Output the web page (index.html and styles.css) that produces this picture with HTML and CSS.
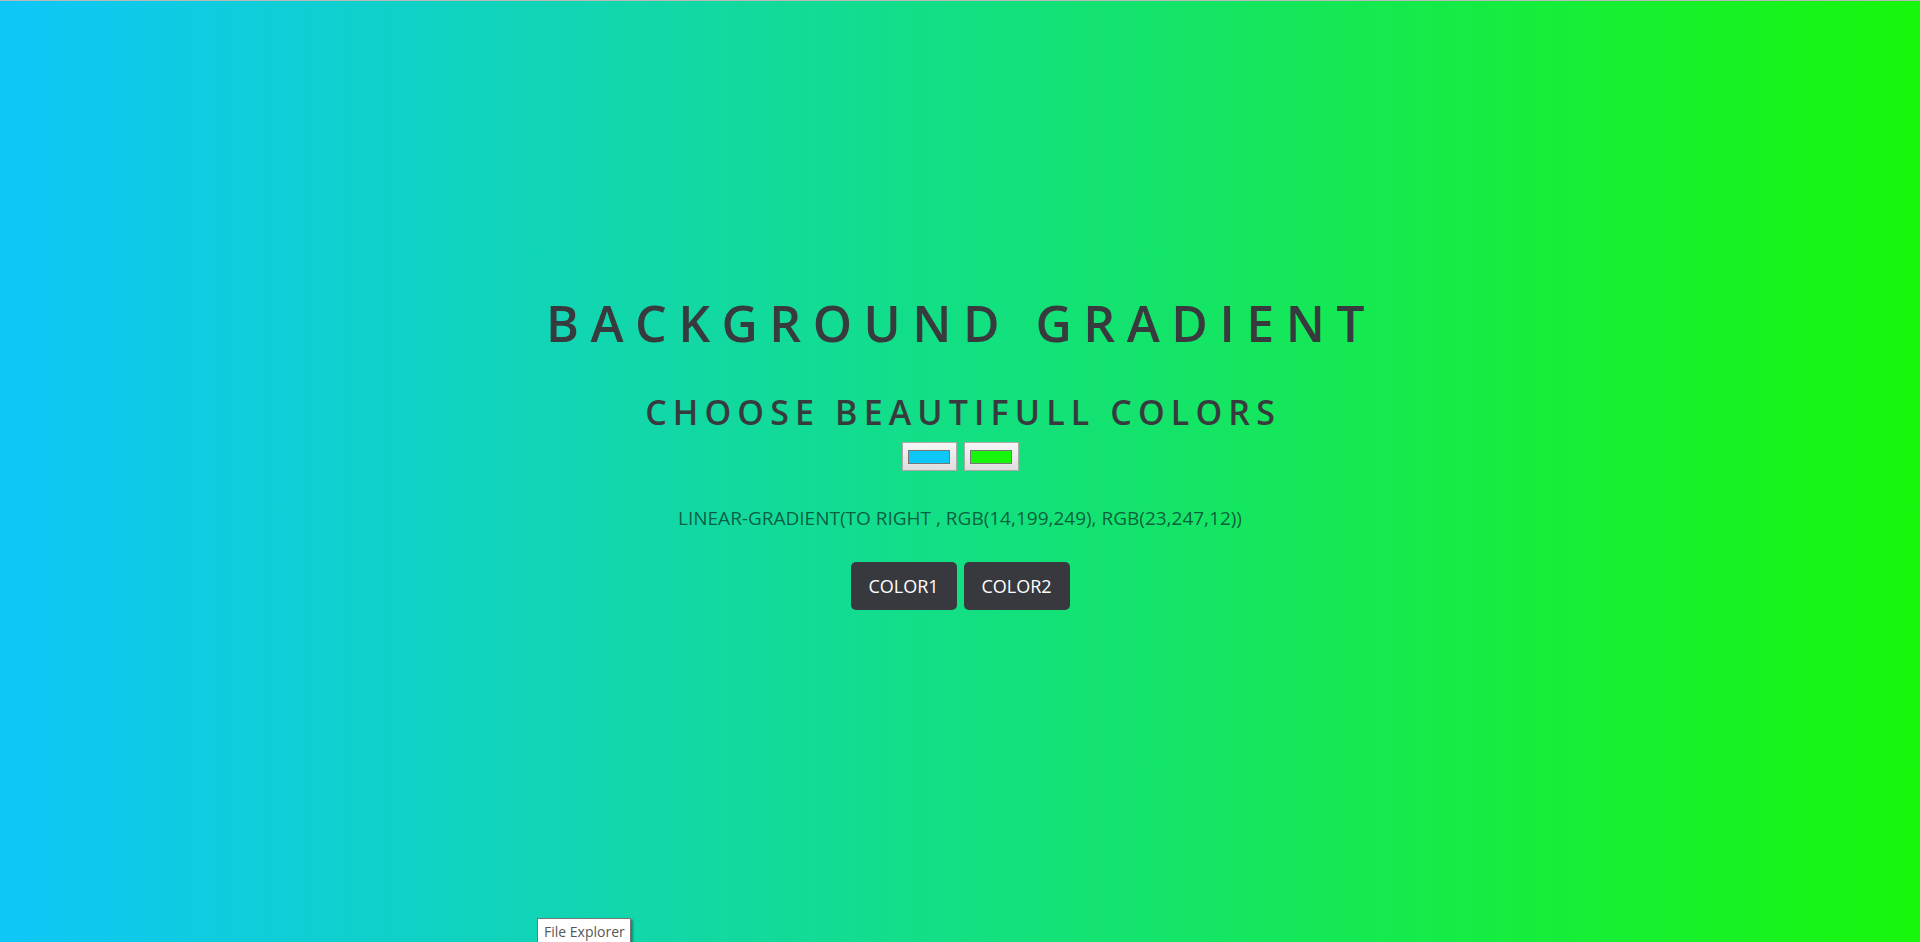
FILE: index.html
```html
<!DOCTYPE html>
<html lang="en">
<head>
<meta charset="utf-8">
<title>Background Generator</title>
<link rel="stylesheet" href="styles.css">
</head>
<body>
<main class="page">
  <h1 class="title">Background Gradient</h1>
  <h2 class="subtitle">Choose Beautifull Colors</h2>
  <div class="pickers">
    <span class="picker"><span class="swatch swatch-1"></span></span>
    <span class="picker"><span class="swatch swatch-2"></span></span>
  </div>
  <p class="css-text">linear-gradient(to right , rgb(14,199,249), rgb(23,247,12))</p>
  <div class="buttons">
    <button class="btn">COLOR1</button>
    <button class="btn">COLOR2</button>
  </div>
</main>
<div class="tooltip">File Explorer</div>
</body>
</html>
```
FILE: styles.css
```css
html, body {
  margin: 0;
  padding: 0;
  height: 100%;
}
body {
  font-family: "Open Sans", "Noto Sans", sans-serif;
  background: linear-gradient(to right, rgb(14,199,249), rgb(23,247,12));
  border-top: 1px solid #b8b8b8;
  box-sizing: border-box;
  overflow: hidden;
  position: relative;
}
.page {
  display: flex;
  flex-direction: column;
  align-items: center;
  padding-top: 294px;
}
.title {
  margin: 0;
  font-size: 50px;
  font-weight: 600;
  line-height: 56px;
  letter-spacing: 11.5px;
  text-transform: uppercase;
  color: #383b3e;
  padding-left: 2px;
}
.subtitle {
  margin: 41px 0 0;
  font-size: 34px;
  font-weight: 600;
  line-height: 40px;
  letter-spacing: 0.18em;
  text-transform: uppercase;
  color: #383b3e;
  padding-left: 0.18em;
}
.pickers {
  display: flex;
  gap: 7px;
  margin-top: 10px;
}
.picker {
  box-sizing: border-box;
  width: 55px;
  height: 29px;
  border: 1px solid #a9a9a9;
  background: linear-gradient(#f6f6f6, #dedede);
  display: flex;
  align-items: center;
  justify-content: center;
}
.swatch {
  box-sizing: border-box;
  width: 42px;
  height: 14px;
  border: 1px solid #777;
}
.swatch-1 { background: rgb(14,199,249); }
.swatch-2 { background: rgb(23,247,12); }
.css-text {
  margin: 34px 0 0;
  font-size: 19px;
  line-height: 26px;
  text-transform: uppercase;
  color: rgba(8, 72, 50, 0.85);
}
.buttons {
  display: flex;
  gap: 7px;
  margin-top: 31px;
}
.btn {
  font-family: "Open Sans", "Noto Sans", sans-serif;
  font-size: 18px;
  color: #fff;
  background: #37393e;
  border: none;
  border-radius: 5px;
  width: 106px;
  height: 48px;
  padding: 0;
}
.tooltip {
  position: absolute;
  left: 537px;
  top: 917px;
  box-sizing: border-box;
  width: 94px;
  height: 28px;
  padding: 3px 0 0 6px;
  background: #fff;
  border: 1px solid #767676;
  box-shadow: 2px 2px 2px rgba(0,0,0,0.35);
  font-size: 14px;
  color: #575757;
  white-space: nowrap;
}
```
